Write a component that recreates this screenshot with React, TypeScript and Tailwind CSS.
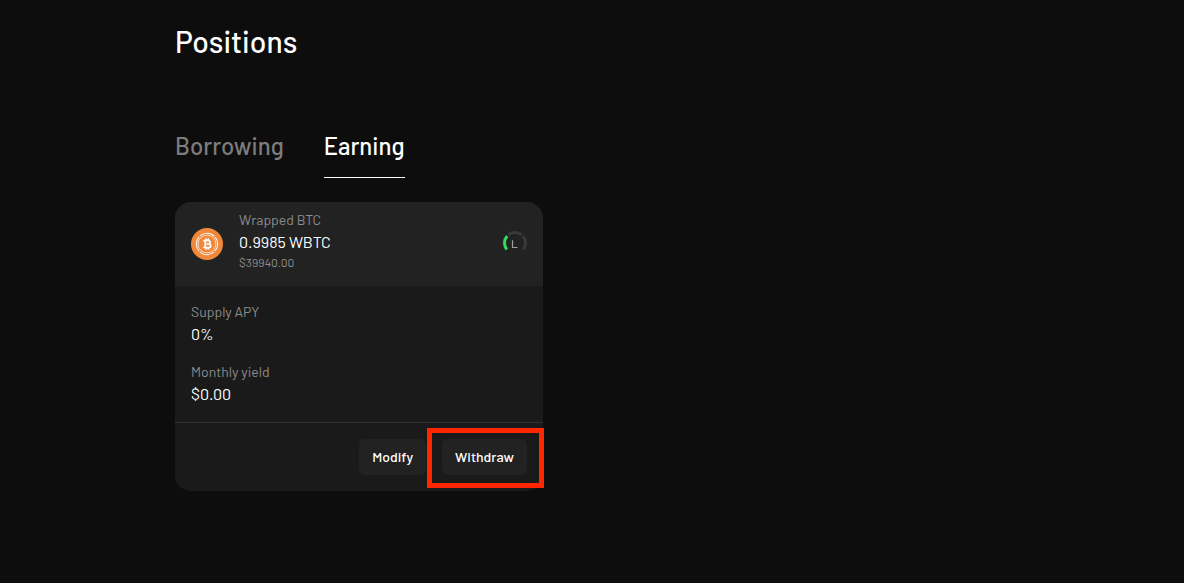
const stats = [
  { label: 'Supply APY', value: '0%' },
  { label: 'Monthly yield', value: '$0.00' },
];

function BitcoinIcon() {
  return (
    <svg className="size-8 shrink-0" viewBox="0 0 32 32" fill="none" aria-hidden="true">
      <circle cx="16" cy="16" r="16" fill="#f0883c" />
      <circle cx="16" cy="16" r="10.7" stroke="#fff" strokeOpacity="0.9" strokeWidth="1.1" strokeDasharray="15.8 1" strokeDashoffset="-8.9" />
      <circle cx="16" cy="16" r="8.9" stroke="#fff" strokeOpacity="0.75" strokeWidth="0.9" />
      <path
        d="M12.2 12.6h5.2a1.6 1.6 0 0 1 0 3.4h-3.4 3.9a1.7 1.7 0 0 1 0 3.5H12.2M14.2 12.6v6.9M15.2 10.6v2M17.4 10.6v2M15.2 19.5v2M17.4 19.5v2"
        stroke="#fff"
        strokeWidth="1.7"
      />
    </svg>
  );
}

function RiskGauge() {
  return (
    <svg className="size-6 shrink-0" viewBox="0 0 24 24" fill="none" strokeWidth="3" role="img" aria-label="Low risk">
      <path d="M3.8 18.5A10.5 10.5 0 0 1 4.2 5" stroke="#2fdc5a" />
      <path d="M5.5 3.8A10.5 10.5 0 0 1 18.5 3.8" stroke="#393939" />
      <path d="M19.8 5A10.5 10.5 0 0 1 20.2 18.5" stroke="#393939" />
      <path d="M9.5 9.3v7.2h5" stroke="#a0a0a0" strokeWidth="1.2" />
    </svg>
  );
}

export default function App() {
  return (
    <div className="min-h-screen bg-[#0d0d0d] px-4 py-6 font-['Barlow','Roboto',sans-serif] text-white">
      <main className="mx-auto max-w-[834px]">
        <h1 className="text-[30px] font-medium leading-[34px]">Positions</h1>

        <nav className="mt-[72px] flex gap-10 text-2xl font-medium" aria-label="Position type">
          <button type="button" className="border-b border-transparent pb-[15px] text-[#7c7c7c]">
            Borrowing
          </button>
          <button type="button" className="border-b border-white pb-[15px]" aria-current="true">
            Earning
          </button>
        </nav>

        <section className="mt-6 w-[368px] max-w-full rounded-2xl bg-[#1a1a1a]">
          <header className="flex items-center gap-4 rounded-t-2xl bg-[#222222] px-4 py-2">
            <BitcoinIcon />
            <div className="grow pb-2">
              <h2 className="text-sm leading-5 text-[#8c8c8c]">Wrapped BTC</h2>
              <p className="text-base leading-6">0.9985 WBTC</p>
              <p className="text-xs leading-4 text-[#8c8c8c]">$39940.00</p>
            </div>
            <div className="pb-0.5">
              <RiskGauge />
            </div>
          </header>

          <dl className="flex flex-col gap-4 p-4">
            {stats.map((s) => (
              <div key={s.label}>
                <dt className="text-sm leading-5 text-[#8c8c8c]">{s.label}</dt>
                <dd className="text-base leading-6">{s.value}</dd>
              </div>
            ))}
          </dl>

          <footer className="flex justify-end gap-4 border-t border-[#303030] p-4 text-sm font-medium">
            <button type="button" className="h-9 rounded-md bg-[#222222] px-[13px]">
              Modify
            </button>
            <div className="relative">
              <button type="button" className="h-9 rounded-md bg-[#222222] px-[13px]">
                Withdraw
              </button>
              <div className="pointer-events-none absolute -bottom-[13px] -left-[15px] -right-[17px] -top-[11px] border-[5px] border-[#ff2600]" />
            </div>
          </footer>
        </section>
      </main>
    </div>
  );
}
